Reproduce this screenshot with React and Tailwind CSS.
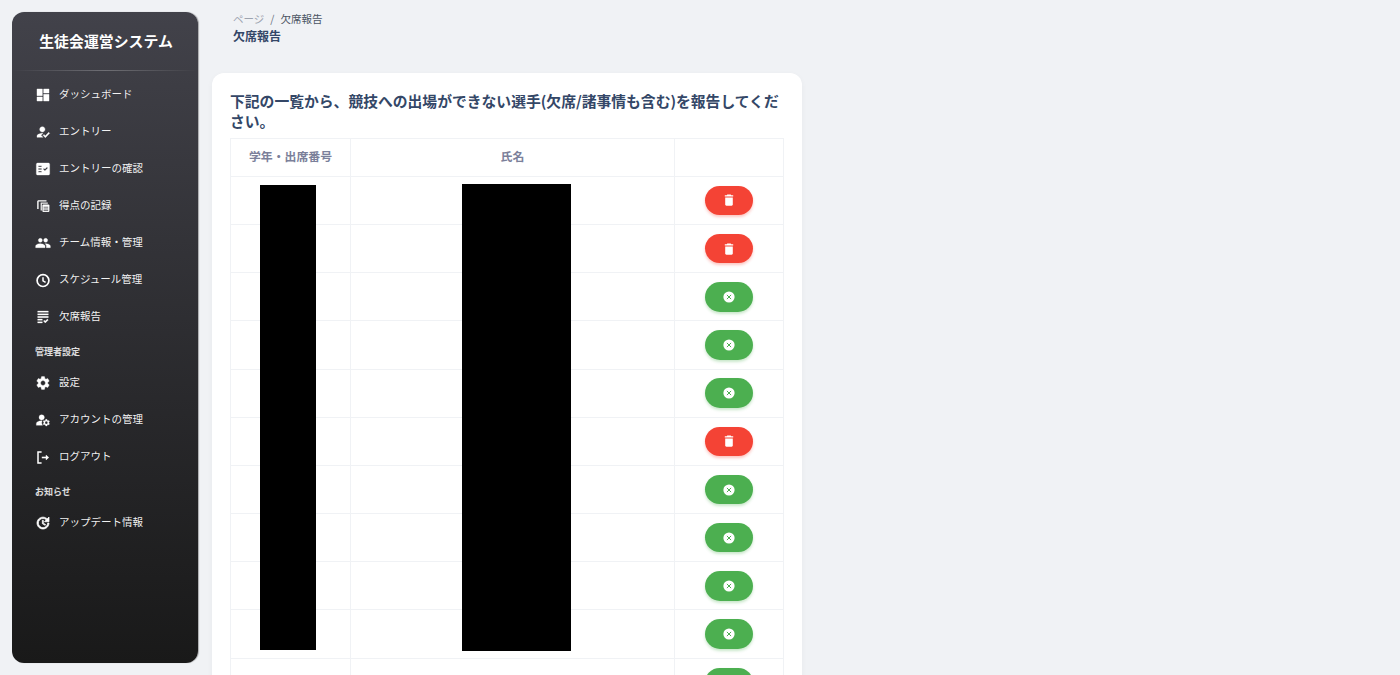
import React from "react";
import {
  MdDashboard, MdHowToReg, MdFactCheck, MdPeople,
  MdGrading, MdSettings, MdManageAccounts, MdUpdate,
} from "react-icons/md";

const Dash = (p) => <MdDashboard {...p} strokeWidth={0.6} />;
const Reg = (p) => <MdHowToReg {...p} strokeWidth={0.5} />;
const Check = (p) => <MdFactCheck {...p} strokeWidth={0.5} />;
const People = (p) => <MdPeople {...p} strokeWidth={0.5} />;
const Grade = (p) => <MdGrading {...p} strokeWidth={0.4} />;
const Gear = (p) => <MdSettings {...p} strokeWidth={0.5} />;
const Manage = (p) => <MdManageAccounts {...p} strokeWidth={0.4} />;
const Upd = (p) => <MdUpdate {...p} strokeWidth={1.1} />;

function Feed(p) {
  return (
    <svg viewBox="0 0 16 16" {...p}>
      <path d="M3.5 2.2h8v1.4h-7.9v7.4H2.2V3.5c0-.7.6-1.3 1.3-1.3z" fill="currentColor" />
      <path d="M5.8 4.6h7v1.2H6.9v6.6H5.6V4.8z" fill="currentColor" opacity="0.9" />
      <rect x="7.4" y="6.4" width="7" height="7.6" rx="1" fill="currentColor" />
      <path d="M8.6 9.2h4.6M8.6 11h4.6M8.6 12.6h4.6" stroke="#33333a" strokeWidth="0.7" />
    </svg>
  );
}

function Clock(p) {
  return (
    <svg viewBox="0 0 16 16" fill="none" stroke="currentColor" {...p}>
      <circle cx="8" cy="8.6" r="5.9" strokeWidth="1.7" />
      <path d="M8 5.2v3.6l2.6 1.6" strokeWidth="1.5" />
    </svg>
  );
}

function Exit(p) {
  return (
    <svg viewBox="0 0 16 16" fill="none" stroke="currentColor" {...p}>
      <path d="M6.6 2.9H3v11h3.6" strokeWidth="1.5" />
      <path d="M6.8 8.5h5.4" strokeWidth="1.6" />
      <path d="M11 6.1l2.8 2.4-2.8 2.4z" fill="currentColor" strokeWidth="0.4" />
    </svg>
  );
}

function Trash(p) {
  return (
    <svg viewBox="0 0 14 14" fill="currentColor" {...p}>
      <path d="M3.2 4.4h7.6v7.2c0 .7-.5 1.2-1.2 1.2H4.4c-.7 0-1.2-.5-1.2-1.2z" />
      <path d="M5.3 1.4h3.4l.6.8h1.9v1.3H2.8V2.2h1.9z" />
    </svg>
  );
}

function CancelIcon(p) {
  return (
    <svg viewBox="0 0 12 12" {...p}>
      <circle cx="6" cy="6" r="5.6" fill="#fff" />
      <path d="M3.9 3.9l4.2 4.2M8.1 3.9l-4.2 4.2" stroke="#4caf50" strokeWidth="1" />
    </svg>
  );
}

const groups = [
  { items: [
    [Dash, "ダッシュボード"],
    [Reg, "エントリー"],
    [Check, "エントリーの確認"],
    [Feed, "得点の記録"],
    [People, "チーム情報・管理"],
    [Clock, "スケジュール管理"],
    [Grade, "欠席報告"],
  ]},
  { label: "管理者設定", items: [
    [Gear, "設定"],
    [Manage, "アカウントの管理"],
    [Exit, "ログアウト"],
  ]},
  { label: "お知らせ", items: [
    [Upd, "アップデート情報"],
  ]},
];

const rows = ["d", "d", "c", "c", "c", "d", "c", "c", "c", "c", "c"];

function NavItem({ Icon, text }) {
  return (
    <li className="flex h-[37px] items-center pl-[23px]">
      <Icon className="w-4 h-4 text-white shrink-0 [&_path[fill=none]]:hidden" />
      <span className="ml-[8px] text-[10.5px] leading-[14px] text-white/95 -translate-y-px">{text}</span>
    </li>
  );
}

function RowButton({ kind }) {
  const del = kind === "d";
  return (
    <button className={`mx-auto flex h-[29.5px] w-[48px] items-center justify-center rounded-full ${del ? "bg-[#f44335] shadow-[0_2px_3px_rgba(244,67,53,0.3)]" : "bg-[#4caf50] shadow-[0_2px_3px_rgba(76,175,80,0.3)]"}`}>
      {del ? <Trash className="w-[14px] h-[14px] text-white" /> : <CancelIcon className="w-3 h-3" />}
    </button>
  );
}

export default function App() {
  return (
    <div className="flex h-[675px] w-[1400px] items-start overflow-hidden bg-[#f0f2f5] font-['Noto_Sans_CJK_JP','Noto_Sans',sans-serif]">
      <aside className="ml-3 mt-3 h-[651px] w-[186px] shrink-0 rounded-xl bg-gradient-to-b from-[#42424a] to-[#191919] shadow-[1px_0_1px_rgba(0,0,0,0.3)]">
        <div className="flex h-[58px] items-center justify-center pl-[2px] pt-[1px] text-[14.9px] font-bold text-white">生徒会運営システム</div>
        <div className="h-px bg-gradient-to-r from-transparent via-white/25 to-transparent" />
        <div className="pt-[5px]">
          {groups.map((g, i) => (
            <div key={i}>
              {g.label && <div className="h-[29px] pl-[23px] pt-[10px] text-[9px] leading-[13px] font-bold text-white/85">{g.label}</div>}
              <ul>
                {g.items.map(([Icon, text]) => <NavItem key={text} Icon={Icon} text={text} />)}
              </ul>
            </div>
          ))}
        </div>
      </aside>
      <main className="ml-[14px] w-[590px] shrink-0">
        <nav className="pl-[21px] pt-[12px]">
          <div className="flex items-center text-[10.5px] leading-[14px]">
            <span className="text-[#9ca3af]">ページ</span>
            <span className="mx-[6px] text-[#6b7280]">/</span>
            <span className="text-[#4b5563]">欠席報告</span>
          </div>
          <h1 className="mt-[1px] text-[12px] leading-[18px] font-bold text-[#344767]">欠席報告</h1>
        </nav>
        <section className="mt-[28px] rounded-xl bg-white px-[19px] pt-[18px] shadow-[0_2px_6px_rgba(0,0,0,0.04)]">
          <h2 className="-ml-px text-[14.8px] leading-[20px] font-bold text-[#344767]">下記の一覧から、競技への出場ができない選手(欠席/諸事情も含む)を報告してください。</h2>
          <div className="relative -ml-px mt-[7px] w-[554px]">
            <div className="border-t border-l border-r border-[#f0f2f5]">
              <div className="grid h-[37.8px] grid-cols-[120px_324px_1fr] border-b border-[#f0f2f5] text-[11.9px] font-bold text-[#7b809a]">
                <div className="flex items-center justify-center border-r border-[#f0f2f5] pb-[2px]">学年・出席番号</div>
                <div className="flex items-center justify-center border-r border-[#f0f2f5] pb-[2px]">氏名</div>
                <div />
              </div>
              {rows.map((k, i) => (
                <div key={i} className="grid h-[48.2px] grid-cols-[120px_324px_1fr] border-b border-[#f0f2f5]">
                  <div className="border-r border-[#f0f2f5]" />
                  <div className="border-r border-[#f0f2f5]" />
                  <div className="flex items-center"><RowButton kind={k} /></div>
                </div>
              ))}
            </div>
            <div className="absolute left-[30px] top-[47px] h-[465px] w-[56px] bg-black" />
            <div className="absolute left-[232px] top-[46px] h-[467px] w-[109px] bg-black" />
          </div>
        </section>
      </main>
    </div>
  );
}
